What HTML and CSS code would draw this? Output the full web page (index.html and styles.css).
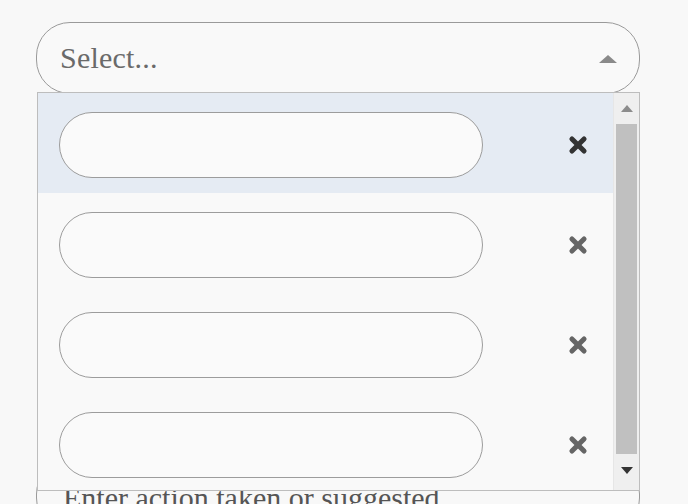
FILE: index.html
```html
<!DOCTYPE html>
<html lang="en">
<head>
    <meta charset="UTF-8">
    <title>Select</title>
    <link rel="stylesheet" href="styles.css">
</head>
<body>

    <div class="page">
        <div class="select">
            <span class="placeholder">Select...</span>
            <span class="caret"></span>
        </div>

        <div class="menu">
            <div class="options">
                <div class="option focused">
                    <div class="pill"></div>
                    <svg class="remove" viewBox="0 0 20 20"><path d="M4.5 4.5L15.5 15.5M15.5 4.5L4.5 15.5"/></svg>
                </div>
                <div class="option">
                    <div class="pill"></div>
                    <svg class="remove" viewBox="0 0 20 20"><path d="M4.5 4.5L15.5 15.5M15.5 4.5L4.5 15.5"/></svg>
                </div>
                <div class="option">
                    <div class="pill"></div>
                    <svg class="remove" viewBox="0 0 20 20"><path d="M4.5 4.5L15.5 15.5M15.5 4.5L4.5 15.5"/></svg>
                </div>
                <div class="option">
                    <div class="pill"></div>
                    <svg class="remove" viewBox="0 0 20 20"><path d="M4.5 4.5L15.5 15.5M15.5 4.5L4.5 15.5"/></svg>
                </div>
            </div>
            <div class="scrollbar">
                <span class="arrow up"></span>
                <div class="thumb"></div>
                <span class="arrow down"></span>
            </div>
        </div>

        <div class="textbox">
            <span class="placeholder dark">Enter action taken or suggested...</span>
        </div>
    </div>

</body>
</html>
```

FILE: styles.css
```css
body{
    margin: 0;
    background-color: #f8f8f8;
    font-family: 'Liberation Serif', serif;
    overflow: hidden;
}
.page{
    position: relative;
    width: 604px;
    padding: 22px 0 0 36px;
}
.select{
    box-sizing: border-box;
    height: 72px;
    border: 1px solid #9a9a9a;
    border-radius: 34px;
    background-color: #f9f9f9;
    display: flex;
    align-items: center;
    justify-content: space-between;
    padding: 0 22px 0 23px;
}
.placeholder{
    font-size: 30px;
    color: #6a6a6a;
    letter-spacing: 0.2px;
}
.placeholder.dark{
    color: #555;
    letter-spacing: 0;
}
.caret{
    width: 0;
    height: 0;
    border-left: 9px solid transparent;
    border-right: 9px solid transparent;
    border-bottom: 8px solid #8a8a8a;
    margin-top: 2px;
}

/* dropdown list lies over the field below */
.menu{
    position: absolute;
    top: 92px;
    left: 37px;
    width: 603px;
    height: 399px;
    box-sizing: border-box;
    border: 1px solid #bdbdbd;
    background-color: #f9f9f9;
    display: flex;
    overflow: hidden;
    z-index: 2;
}
.options{
    flex: 1;
}
.option{
    height: 100px;
    box-sizing: border-box;
    display: flex;
    align-items: center;
    padding: 4px 0 0 21px;
}
.option.focused{
    background-color: #e5ebf3;
}
.pill{
    width: 424px;
    height: 66px;
    box-sizing: border-box;
    border: 1px solid #9c9c9c;
    border-radius: 33px;
    background-color: #fafafa;
}
.remove{
    width: 22px;
    height: 22px;
    margin-left: 84px;
    fill: none;
    stroke: #666;
    stroke-width: 4.6;
    stroke-linecap: round;
}
.focused .remove{
    stroke: #333;
}
.scrollbar{
    width: 25px;
    background-color: #efefef;
    display: flex;
    flex-direction: column;
    align-items: center;
    border-left: 1px solid #e6e6e6;
}
.arrow{
    width: 0;
    height: 0;
    border-left: 6px solid transparent;
    border-right: 6px solid transparent;
}
.arrow.up{
    border-bottom: 7px solid #8c8c8c;
    margin: 12px 0 12px;
}
.arrow.down{
    border-top: 7px solid #333;
    margin-top: 13px;
}
.thumb{
    width: 21px;
    height: 330px;
    background-color: #c0c0c0;
}

.textbox{
    box-sizing: border-box;
    margin-top: 366px;
    height: 72px;
    border: 1px solid #9a9a9a;
    border-radius: 34px;
    display: flex;
    align-items: center;
    padding: 4px 0 0 26px;
}
```
